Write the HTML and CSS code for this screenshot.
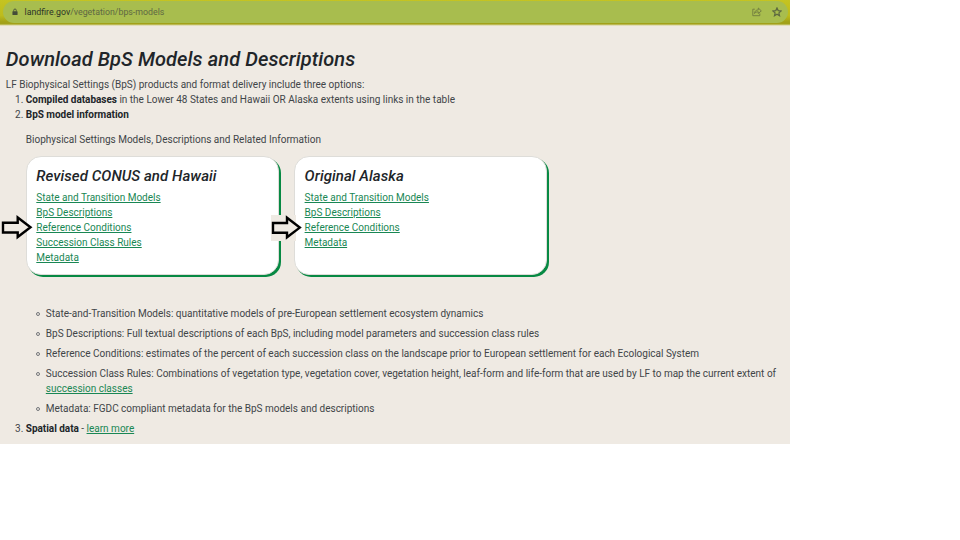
FILE: index.html
```
<!DOCTYPE html>
<html lang="en">
<head>
<meta charset="utf-8">
<title>BpS Models</title>
<link rel="stylesheet" href="styles.css">
</head>
<body>
<div class="page">
  <header class="browser">
    <div class="address">
      <svg class="lock" width="6" height="8" viewBox="0 0 7 8"><path d="M2 3.5V2a1.5 1.5 0 0 1 3 0v1.5" fill="none" stroke="#444c38" stroke-width="1"/><rect x=".5" y="3" width="6" height="4.5" rx=".7" fill="#444c38"/></svg>
      <span class="url"><span class="host">landfire.gov</span>/vegetation/bps-models</span>
      <svg class="share" width="10" height="10" viewBox="0 0 10 10" fill="none" stroke="#6f7b3f" stroke-width=".9"><path d="M2.800 2.200H.8v6.500h7V6.500M2.500 6.500c.2-2.400 1.500-3.500 3.800-3.600V1l3 2.900-3 2.600V4.800C4.500 4.800 3.400 5.300 2.500 6.500Z"/></svg>
      <svg class="star" width="10" height="10" viewBox="0 0 10 10" fill="none" stroke="#5d6840" stroke-width="1.200"><path d="M5 .9l1.200 2.700 2.900.3-2.200 2 .65 2.900L5 7.300 2.450 8.800l.65-2.900-2.200-2 2.900-.3Z"/></svg>
    </div>
  </header>
  <main>
    <h1>Download BpS Models and Descriptions</h1>
    <p class="intro">LF Biophysical Settings (BpS) products and format delivery include three options:</p>
    <ol class="options">
      <li><b>Compiled databases</b> in the Lower 48 States and Hawaii OR Alaska extents using links in the table</li>
      <li><b>BpS model information</b>
        <p class="caption">Biophysical Settings Models, Descriptions and Related Information</p>
        <div class="cards">
          <section class="card">
            <h2>Revised CONUS and Hawaii</h2>
            <a>State and Transition Models</a>
            <a>BpS Descriptions</a>
            <a>Reference Conditions</a>
            <a>Succession Class Rules</a>
            <a>Metadata</a>
            <svg class="arrow" width="33" height="26" viewBox="0 0 33 26"><path d="M2 7.700h14.700V2.500L29.500 12.300 16.700 22V17.500H2Z"/></svg>
          </section>
          <section class="card">
            <h2>Original Alaska</h2>
            <a>State and Transition Models</a>
            <a>BpS Descriptions</a>
            <a>Reference Conditions</a>
            <a>Metadata</a>
            <svg class="arrow patch" width="33" height="26" viewBox="0 0 33 26"><rect class="backing" width="25" height="26"/><path d="M2 8h14V2.800L28.800 12.600 16 22.300V17.800H2Z"/></svg>
          </section>
        </div>
        <ul class="details">
          <li>State-and-Transition Models: quantitative models of pre-European settlement ecosystem dynamics</li>
          <li>BpS Descriptions: Full textual descriptions of each BpS, including model parameters and succession class rules</li>
          <li>Reference Conditions: estimates of the percent of each succession class on the landscape prior to European settlement for each Ecological System</li>
          <li>Succession Class Rules: Combinations of vegetation type, vegetation cover, vegetation height, leaf-form and life-form that are used by LF to map the current extent of <br><a>succession classes</a></li>
          <li>Metadata: FGDC compliant metadata for the BpS models and descriptions</li>
        </ul>
      </li>
      <li><b>Spatial data</b> - <a>learn more</a></li>
    </ol>
  </main>
</div>
</body>
</html>
```
FILE: styles.css
```
*, *::before { box-sizing: border-box; }
body { margin: 0; background: #fff; font: 10px/15px Roboto, sans-serif; color: #414548; }
h1, h2, p, ol, ul { margin: 0; padding: 0; }
.page { width: 790px; height: 444px; background: #efeae3; overflow: hidden; }
.browser {
  height: 26px;
  padding: 1px 2px 3px 3px;
  background: linear-gradient(#c5c421 0, #bdbc1c 60%, #a2a119 22px, #a2a119 24px, #d2cf8c 25px, #efeae3 26px);
}
.address { display: flex; align-items: center; height: 22px; padding: 0 6px 0 9px; border-radius: 11px; background: #a8bd4e; }
.url { margin-left: 6.5px; font-size: 8.8px; color: #5e6843; white-space: nowrap; }
.host { color: #2b3328; }
.share { margin-left: auto; }
.star { margin-left: 10px; }
main { padding: 21px 6px 0 5.8px; }
h1 { font-size: 20px; line-height: 24px; font-weight: 500; font-style: italic; letter-spacing: .09px; color: #212529; white-space: nowrap; }
.intro { margin-top: 6px; }
.options { padding-left: 20px; }
b { font-weight: 700; letter-spacing: -.03px; color: #212529; }
.caption { margin-top: 10px; }
.cards { display: flex; gap: 15px; margin-top: 9px; }
.card {
  position: relative;
  display: flex;
  flex-direction: column;
  align-items: flex-start;
  width: 253.3px;
  height: 119px;
  padding: 10px 9.5px;
  border: 1px solid #deddd9;
  border-radius: 15px;
  background: #fff;
  box-shadow: 2px 2px 0 #078943;
}
h2 { margin-bottom: 5px; font-size: 15px; line-height: 18px; font-weight: 500; font-style: italic; letter-spacing: .06px; color: #212529; }
a { color: #198754; text-decoration: underline; }
.arrow { position: absolute; left: -26px; top: 58px; }
.patch { left: -24px; }
.arrow path { fill: #efeae3; stroke: #000; stroke-width: 2.4; }
.backing { fill: #efeae3; }
.details { margin-top: 31px; padding-left: 20px; list-style: none; }
.details li { position: relative; margin-bottom: 5px; }
.details li::before {
  content: "";
  position: absolute;
  left: -10px;
  top: 6px;
  width: 4px;
  height: 4px;
  border: 1px solid #73767a;
  border-radius: 50%;
}
```
